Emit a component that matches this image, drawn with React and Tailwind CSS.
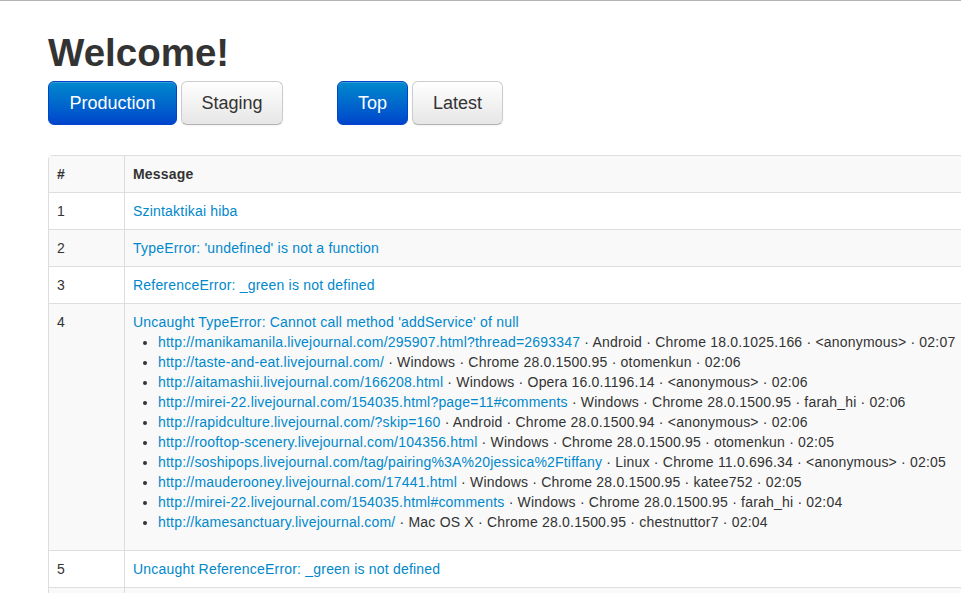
import React from 'react';

const hits = [
    ['http://manikamanila.livejournal.com/295907.html?thread=2693347', 'Android', 'Chrome 18.0.1025.166', '<anonymous>', '02:07'],
    ['http://taste-and-eat.livejournal.com/', 'Windows', 'Chrome 28.0.1500.95', 'otomenkun', '02:06'],
    ['http://aitamashii.livejournal.com/166208.html', 'Windows', 'Opera 16.0.1196.14', '<anonymous>', '02:06'],
    ['http://mirei-22.livejournal.com/154035.html?page=11#comments', 'Windows', 'Chrome 28.0.1500.95', 'farah_hi', '02:06'],
    ['http://rapidculture.livejournal.com/?skip=160', 'Android', 'Chrome 28.0.1500.94', '<anonymous>', '02:06'],
    ['http://rooftop-scenery.livejournal.com/104356.html', 'Windows', 'Chrome 28.0.1500.95', 'otomenkun', '02:05'],
    ['http://soshipops.livejournal.com/tag/pairing%3A%20jessica%2Ftiffany', 'Linux', 'Chrome 11.0.696.34', '<anonymous>', '02:05'],
    ['http://mauderooney.livejournal.com/17441.html', 'Windows', 'Chrome 28.0.1500.95', 'katee752', '02:05'],
    ['http://mirei-22.livejournal.com/154035.html#comments', 'Windows', 'Chrome 28.0.1500.95', 'farah_hi', '02:04'],
    ['http://kamesanctuary.livejournal.com/', 'Mac OS X', 'Chrome 28.0.1500.95', 'chestnuttor7', '02:04'],
];

const errors = [
    { id: 1, msg: 'Szintaktikai hiba' },
    { id: 2, msg: "TypeError: 'undefined' is not a function" },
    { id: 3, msg: 'ReferenceError: _green is not defined' },
    { id: 4, msg: "Uncaught TypeError: Cannot call method 'addService' of null", hits },
    { id: 5, msg: 'Uncaught ReferenceError: _green is not defined' },
    { id: 6, msg: '' },
];

const Btn = ({ primary, className, children }) => (
    <button
        type="button"
        className={
            primary
                ? `h-[44px] rounded-[6px] border border-[#0044cc] bg-gradient-to-b from-[#0088cc] to-[#0044cc] text-[18px] text-white shadow-[inset_0_1px_0_rgba(255,255,255,0.2)] ${className}`
                : `h-[44px] rounded-[6px] border border-[#cccccc] border-b-[#b3b3b3] bg-gradient-to-b from-[#ffffff] to-[#e6e6e6] text-[18px] text-[#333333] shadow-[inset_0_1px_0_rgba(255,255,255,0.2),0_1px_2px_rgba(0,0,0,0.05)] ${className}`
        }
    >
        {children}
    </button>
);

export default function App() {
    return (
        <div className="min-h-[593px] w-full overflow-hidden border-t border-[#b4b4b4] bg-white font-['Liberation_Sans',Arial,sans-serif] text-[14px] leading-[20px] text-[#333333]">
            <div className="pl-[48px] pt-[32px]">
                <h1 className="text-[38.5px] font-bold leading-[40px] text-[#333333]">Welcome!</h1>
                <div className="mt-[8px] flex">
                    <div className="flex gap-[4px]">
                        <Btn primary className="w-[129px]">Production</Btn>
                        <Btn className="w-[102px]">Staging</Btn>
                    </div>
                    <div className="ml-[54px] flex gap-[4px]">
                        <Btn primary className="w-[71px]">Top</Btn>
                        <Btn className="w-[91px]">Latest</Btn>
                    </div>
                </div>
                <table className="mt-[30px] w-[1000px] border-separate border-spacing-0 rounded-tl-[4px] border border-[#dddddd] tracking-[0.2px]">
                    <tbody>
                        <tr className="bg-[#f9f9f9]">
                            <th className="w-[75px] px-[8px] py-[8px] text-left align-top font-bold">#</th>
                            <th className="border-l border-[#dddddd] px-[8px] py-[8px] text-left align-top font-bold">Message</th>
                        </tr>
                        {errors.map((e, i) => (
                            <tr key={e.id} className={i % 2 === 1 ? 'bg-[#f9f9f9]' : 'bg-white'}>
                                <td className="border-t border-[#dddddd] px-[8px] py-[8px] align-top">{e.msg ? e.id : '\u00a0'}</td>
                                <td className="border-l border-t border-[#dddddd] px-[8px] py-[8px] align-top">
                                    <a className="text-[#0088cc]">{e.msg}</a>
                                    {e.hits && (
                                        <ul className="mb-[10px] ml-[25px] list-disc">
                                            {e.hits.map((h, j) => (
                                                <li key={j}>
                                                    <a className="text-[#0088cc]">{h[0]}</a>
                                                    {' · ' + h.slice(1).join(' · ')}
                                                </li>
                                            ))}
                                        </ul>
                                    )}
                                </td>
                            </tr>
                        ))}
                    </tbody>
                </table>
            </div>
        </div>
    );
}
